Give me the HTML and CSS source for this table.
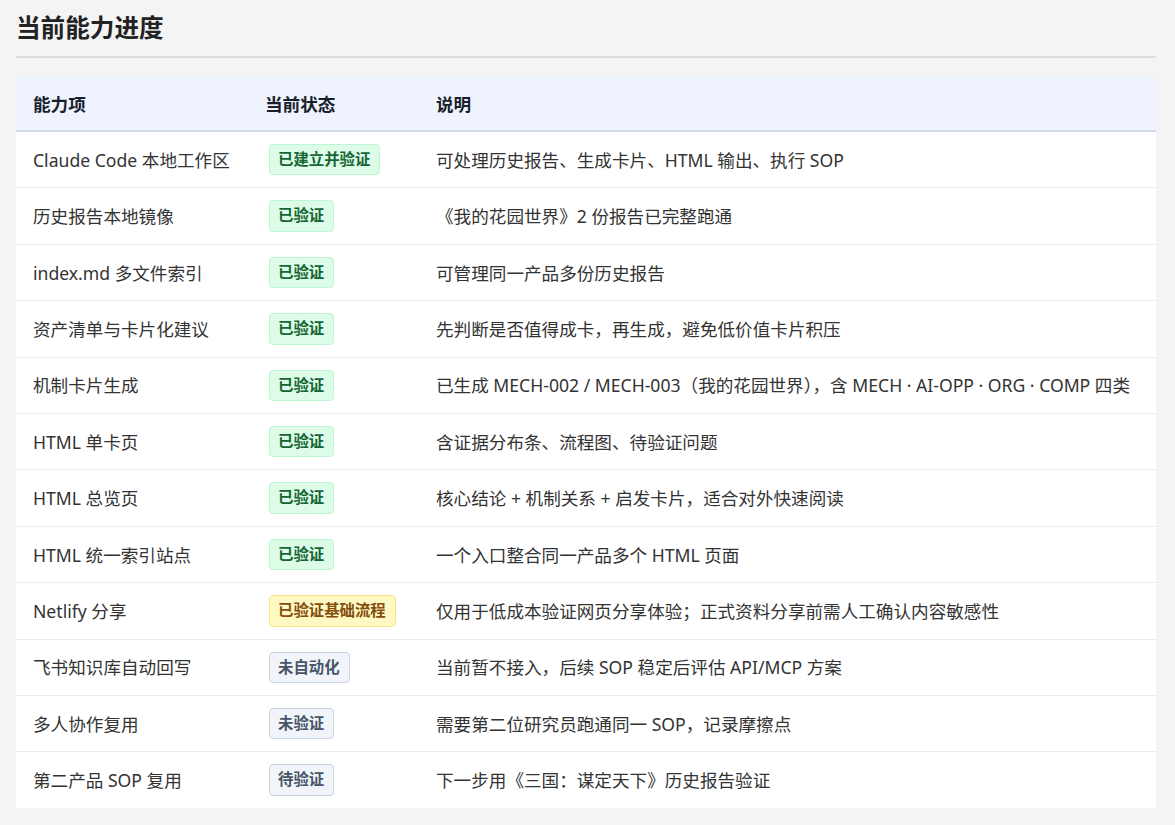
FILE: index.html
```html
<!DOCTYPE html>
<html lang="zh-CN">
<head>
<meta charset="utf-8">
<title>当前能力进度</title>
<link rel="stylesheet" href="styles.css">
</head>
<body>
<section class="section">
  <h2 class="section-title">当前能力进度</h2>
  <table class="progress-table">
    <colgroup>
      <col class="col-name">
      <col class="col-status">
      <col class="col-desc">
    </colgroup>
    <thead>
      <tr><th>能力项</th><th>当前状态</th><th>说明</th></tr>
    </thead>
    <tbody>
      <tr><td>Claude Code 本地工作区</td><td><span class="badge badge-ok">已建立并验证</span></td><td>可处理历史报告、生成卡片、HTML 输出、执行 SOP</td></tr>
      <tr><td>历史报告本地镜像</td><td><span class="badge badge-ok">已验证</span></td><td>《我的花园世界》2 份报告已完整跑通</td></tr>
      <tr><td>index.md 多文件索引</td><td><span class="badge badge-ok">已验证</span></td><td>可管理同一产品多份历史报告</td></tr>
      <tr><td>资产清单与卡片化建议</td><td><span class="badge badge-ok">已验证</span></td><td>先判断是否值得成卡，再生成，避免低价值卡片积压</td></tr>
      <tr><td>机制卡片生成</td><td><span class="badge badge-ok">已验证</span></td><td>已生成 MECH-002 / MECH-003（我的花园世界），含 MECH · AI-OPP · ORG · COMP 四类</td></tr>
      <tr><td>HTML 单卡页</td><td><span class="badge badge-ok">已验证</span></td><td>含证据分布条、流程图、待验证问题</td></tr>
      <tr><td>HTML 总览页</td><td><span class="badge badge-ok">已验证</span></td><td>核心结论 + 机制关系 + 启发卡片，适合对外快速阅读</td></tr>
      <tr><td>HTML 统一索引站点</td><td><span class="badge badge-ok">已验证</span></td><td>一个入口整合同一产品多个 HTML 页面</td></tr>
      <tr><td>Netlify 分享</td><td><span class="badge badge-warn">已验证基础流程</span></td><td>仅用于低成本验证网页分享体验；正式资料分享前需人工确认内容敏感性</td></tr>
      <tr><td>飞书知识库自动回写</td><td><span class="badge badge-muted">未自动化</span></td><td>当前暂不接入，后续 SOP 稳定后评估 API/MCP 方案</td></tr>
      <tr><td>多人协作复用</td><td><span class="badge badge-muted">未验证</span></td><td>需要第二位研究员跑通同一 SOP，记录摩擦点</td></tr>
      <tr><td>第二产品 SOP 复用</td><td><span class="badge badge-muted">待验证</span></td><td>下一步用《三国：谋定天下》历史报告验证</td></tr>
    </tbody>
  </table>
</section>
</body>
</html>
```

FILE: styles.css
```css
html, body {
  margin: 0;
  padding: 0;
  background: #f4f4f4;
}

body {
  font-family: "Noto Sans", "Noto Sans CJK SC", sans-serif;
  color: #333;
  padding: 0 19px 0 16px;
}

.section-title {
  margin: 0;
  padding: 11px 0 11px;
  font-size: 24.6px;
  line-height: 34px;
  font-weight: 700;
  color: #222;
  border-bottom: 2px solid #dddddd;
}

.progress-table {
  width: 100%;
  margin-top: 18px;
  border-collapse: collapse;
  background: #ffffff;
  table-layout: fixed;
}

.col-name { width: 232px; }
.col-status { width: 171px; }

.progress-table th {
  text-align: left;
  background: #eef3fe;
  font-size: 17.6px;
  font-weight: 700;
  color: #1a1f2b;
  height: 54px;
  padding: 0 17px;
  border-bottom: 2px solid #d2d9ef;
}

.progress-table td {
  font-size: 17.6px;
  line-height: 24px;
  padding: 12px 17px;
  border-bottom: 1px solid #ebebeb;
  vertical-align: middle;
  white-space: nowrap;
}

.progress-table tbody tr:last-child td {
  border-bottom: none;
}

.badge {
  display: inline-block;
  vertical-align: middle;
  margin-left: 4px;
  padding: 3px 9px 3px 8px;
  font-size: 15.4px;
  line-height: 23.4px;
  font-weight: 700;
  border: 1px solid;
  border-radius: 4px;
}

.badge-ok {
  background: #dcfce7;
  border-color: #bbf7d0;
  color: #166534;
}

.badge-warn {
  background: #fef9c3;
  border-color: #fde68a;
  color: #854d0e;
}

.badge-muted {
  background: #f1f5f9;
  border-color: #cbd5e1;
  color: #475569;
}
```
